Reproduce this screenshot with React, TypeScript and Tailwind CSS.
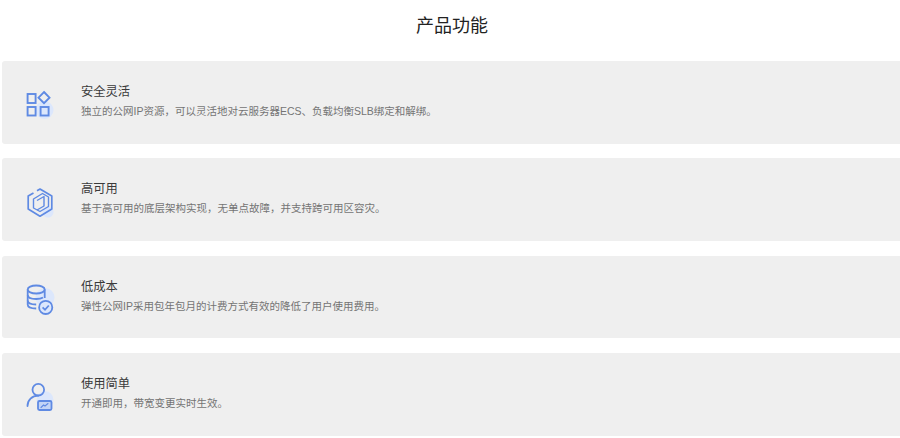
import React from 'react'

const blue = '#5f8ae3'
const tint = '#dce7fc'

const GridIcon = () => (
  <svg width="38" height="38" viewBox="0 0 38 38" fill="none">
    <circle cx="21.5" cy="27" r="9" fill={tint} />
    <g stroke={blue} strokeWidth="1.9">
      <rect x="4.6" y="11" width="8" height="9" />
      <rect x="4.6" y="24" width="8" height="8.5" />
      <rect x="17.6" y="24" width="8" height="8.5" />
      <path d="M21 9 26.5 14.7 21 20.2 15.5 14.7Z" />
    </g>
  </svg>
)

const HexIcon = () => (
  <svg width="38" height="38" viewBox="0 0 38 38" fill="none">
    <circle cx="25" cy="31" r="5.5" fill={tint} />
    <g stroke={blue} strokeWidth="1.7" strokeLinejoin="round">
      <path d="M14 9.7 17 8 28.8 15V28L17 35.2 5.2 28V15L10.5 11.9" />
      <path d="M10.5 18 19.5 12.5 25.5 16V25.5L17 30.5 10.5 27Z" strokeWidth="1.4" />
      <path d="M14 19.5 21 15.5V25L14 29" strokeWidth="1.4" />
    </g>
  </svg>
)

const DbIcon = () => (
  <svg width="38" height="38" viewBox="0 0 38 38" fill="none">
    <circle cx="22" cy="19.5" r="9.5" fill={tint} />
    <g stroke={blue} strokeWidth="1.8">
      <ellipse cx="13.2" cy="11.5" rx="8.5" ry="4" />
      <path d="M4.7 11.5V26.5C4.7 29 8.5 30.5 13.2 30.5" />
      <path d="M21.7 11.5V20" />
      <path d="M4.7 17C4.7 19.5 8.5 21 13.2 21 16 21 18.5 20.5 20 19.5" />
      <path d="M4.7 22.5C4.7 25 8.5 26.5 13.2 26.5" />
      <circle cx="22.7" cy="29.4" r="6.6" fill={tint} />
      <path d="M19.6 29.4 22 31.8 25.8 27.5" />
    </g>
  </svg>
)

const UserIcon = () => (
  <svg width="38" height="38" viewBox="0 0 38 38" fill="none">
    <circle cx="22" cy="24.7" r="8.5" fill={tint} />
    <g stroke={blue} strokeWidth="1.8" strokeLinecap="round">
      <circle cx="15.3" cy="14.7" r="5.8" />
      <path d="M4.5 31C4.5 25 9 20.7 15.3 20.7" />
      <rect x="15" y="26" width="13.5" height="9" rx="1.5" fill="#c3d4f6" />
      <path d="M18 32.5 20.5 30 22 31 25 28.5" strokeWidth="1.1" />
    </g>
  </svg>
)

const features = [
  {
    icon: <GridIcon />,
    title: '安全灵活',
    desc: '独立的公网IP资源，可以灵活地对云服务器ECS、负载均衡SLB绑定和解绑。',
  },
  {
    icon: <HexIcon />,
    title: '高可用',
    desc: '基于高可用的底层架构实现，无单点故障，并支持跨可用区容灾。',
  },
  {
    icon: <DbIcon />,
    title: '低成本',
    desc: '弹性公网IP采用包年包月的计费方式有效的降低了用户使用费用。',
  },
  {
    icon: <UserIcon />,
    title: '使用简单',
    desc: '开通即用，带宽变更实时生效。',
  },
]

const App = () => (
  <div className="w-[900px] h-[438px] overflow-hidden bg-white font-['Liberation_Sans','Noto_Sans_CJK_SC',sans-serif]">
    <h1 className="h-[61px] pt-[13px] pl-[4px] text-center text-[18px] leading-[26px] font-normal text-[#222222]">
      产品功能
    </h1>
    <div className="flex flex-col gap-[14.9px] pl-[2px]">
      {features.map((f) => (
        <div
          key={f.title}
          className="flex items-center h-[82.5px] rounded-l-[3px] bg-[#efefef]"
        >
          <div className="w-[79px] pl-[21px] shrink-0">{f.icon}</div>
          <div className="pb-[3px]">
            <p className="text-[12.25px] leading-[16px] text-[#3a3a3a]">{f.title}</p>
            <p className="mt-[4px] text-[10.5px] leading-[14px] text-[#747474]">{f.desc}</p>
          </div>
        </div>
      ))}
    </div>
  </div>
)

export default App
